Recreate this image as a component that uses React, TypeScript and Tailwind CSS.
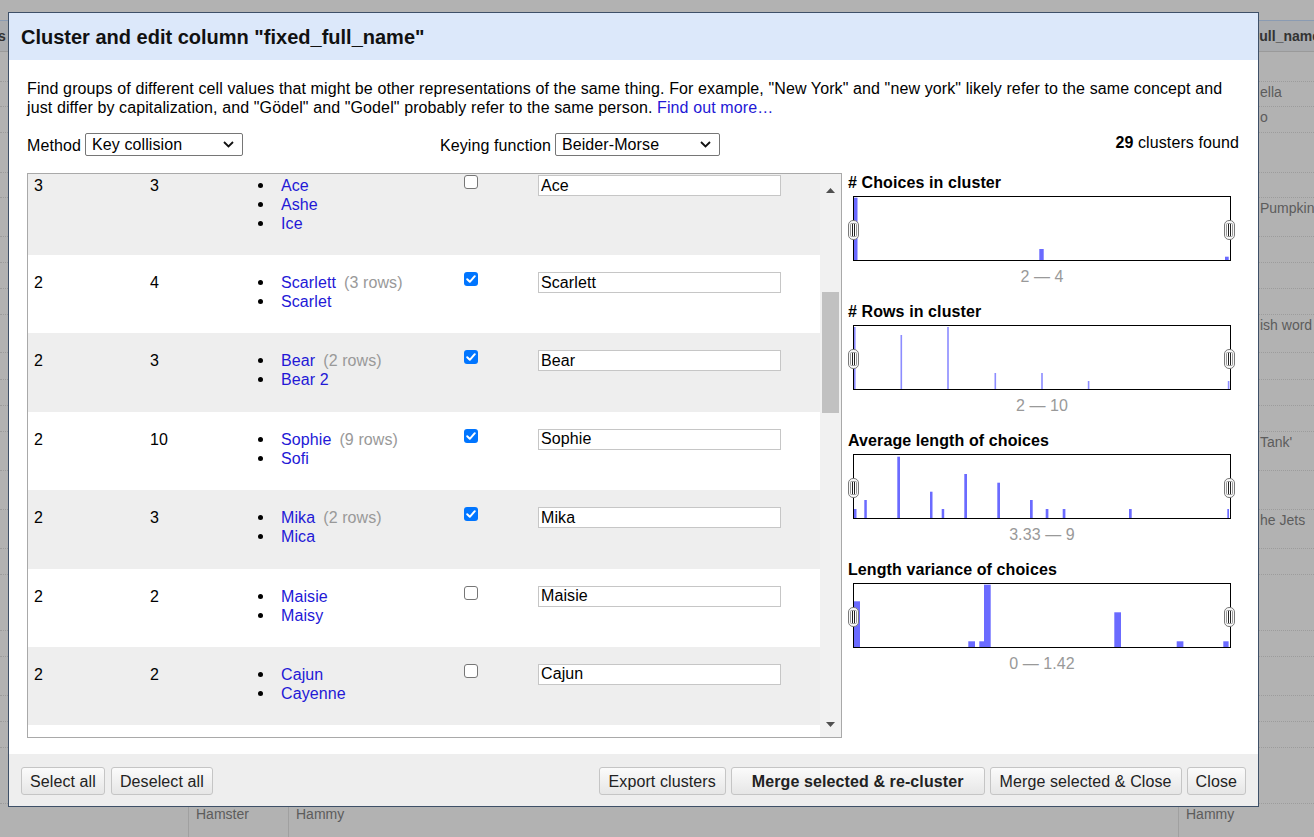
import React from "react";

const FONT = "font-['Liberation_Sans',Arial,sans-serif]";

type BgRow = { h: string; t?: string };
const bgRows: BgRow[] = [
  { h: "h-[30px]" },
  { h: "h-[25px]", t: "ella" },
  { h: "h-[26px]", t: "o" },
  { h: "h-[40px]" },
  { h: "h-[25px]" },
  { h: "h-[39px]", t: "Pumpkin" },
  { h: "h-[26px]" },
  { h: "h-[26px]" },
  { h: "h-[26px]" },
  { h: "h-[38px]", t: "ish word" },
  { h: "h-[27px]" },
  { h: "h-[26px]" },
  { h: "h-[26px]" },
  { h: "h-[39px]", t: "Tank'" },
  { h: "h-[39px]" },
  { h: "h-[39px]", t: "he Jets" },
  { h: "h-[26px]" },
  { h: "h-[56px]" },
  { h: "h-[26px]" },
  { h: "h-[39px]" },
  { h: "h-[26px]" },
  { h: "h-[26px]" },
  { h: "h-[56px]" },
];

type Name = { n: string; rows?: number };
type Cluster = { size: number; rows: number; names: Name[]; checked: boolean; value: string };

const clusters: Cluster[] = [
  { size: 3, rows: 3, names: [{ n: "Ace" }, { n: "Ashe" }, { n: "Ice" }], checked: false, value: "Ace" },
  { size: 2, rows: 4, names: [{ n: "Scarlett", rows: 3 }, { n: "Scarlet" }], checked: true, value: "Scarlett" },
  { size: 2, rows: 3, names: [{ n: "Bear", rows: 2 }, { n: "Bear 2" }], checked: true, value: "Bear" },
  { size: 2, rows: 10, names: [{ n: "Sophie", rows: 9 }, { n: "Sofi" }], checked: true, value: "Sophie" },
  { size: 2, rows: 3, names: [{ n: "Mika", rows: 2 }, { n: "Mica" }], checked: true, value: "Mika" },
  { size: 2, rows: 2, names: [{ n: "Maisie" }, { n: "Maisy" }], checked: false, value: "Maisie" },
  { size: 2, rows: 2, names: [{ n: "Cajun" }, { n: "Cayenne" }], checked: false, value: "Cajun" },
];

function Background() {
  return (
    <div className="flex flex-col text-[14px] text-[#5c5c5c] leading-[19px]">
      <div className="h-[20px]" />
      <div className="h-[32px] bg-[#a9abae] border-t border-[#8a9bb3] border-b border-b-[#9a9a9a] flex items-center justify-between font-bold text-[#333]">
        <span className="-ml-[2px]">s</span>
        <span className="mr-[-6px]">ull_name</span>
      </div>
      {bgRows.map((r, i) => (
        <div key={i} className={`${r.h} shrink-0 border-b border-dotted border-[#9c9c9c] pt-[1px]`}>
          {r.t ? <span className="ml-[1260px] whitespace-nowrap">{r.t}</span> : null}
        </div>
      ))}
      <div className="flex h-[40px] pt-[1px]">
        <div className="w-[188px]" />
        <div className="w-[100px] border-l border-[#a0a0a0] pl-[7px]">Hamster</div>
        <div className="w-[890px] border-l border-[#a0a0a0] pl-[7px]">Hammy</div>
        <div className="flex-1 border-l border-[#a0a0a0] pl-[7px]">Hammy</div>
      </div>
    </div>
  );
}

function Chevron() {
  return (
    <svg width="11" height="7" viewBox="0 0 11 7" className="block">
      <polyline points="1,1 5.5,5.5 10,1" fill="none" stroke="#111" strokeWidth="1.8" />
    </svg>
  );
}

function FakeSelect({ text, w }: { text: string; w: string }) {
  return (
    <div className={`${w} h-[23px] border border-[#767676] rounded-[2px] bg-white flex items-center justify-between pl-[6px] pr-[8px]`}>
      <span className="leading-[19px]">{text}</span>
      <Chevron />
    </div>
  );
}

function Checkbox({ checked }: { checked: boolean }) {
  if (checked) {
    return (
      <div className="w-[14px] h-[14px] rounded-[3px] bg-[#0075ff] flex items-center justify-center">
        <svg width="14" height="14" viewBox="0 0 14 14" className="block">
          <polyline points="3.2,7.2 5.8,9.8 10.8,4.2" fill="none" stroke="#fff" strokeWidth="2" strokeLinecap="round" strokeLinejoin="round" />
        </svg>
      </div>
    );
  }
  return <div className="w-[14px] h-[14px] rounded-[3px] border border-[#767676] bg-white" />;
}

function ClusterRow({ c, first, gray }: { c: Cluster; first: boolean; gray: boolean }) {
  return (
    <div
      className={`flex shrink-0 ${first ? "h-[81px] pt-[2px]" : "h-[78.4px] pt-[18px]"} ${gray ? "bg-[#eeeeee]" : "bg-white"}`}
    >
      <div className="w-[122px] pl-[6px] leading-[19px]">{c.size}</div>
      <div className="w-[91px] leading-[19px]">{c.rows}</div>
      <div className="w-[223px] pl-[17px] flex flex-col">
        {c.names.map((n) => (
          <div key={n.n} className="flex items-center h-[19px]">
            <span className="w-[5px] h-[5px] rounded-full bg-black mr-[18px] shrink-0" />
            <span className="text-[#2318d6] leading-[19px]">{n.n}</span>
            {n.rows ? <span className="ml-[8px] text-[#999] leading-[19px]">({n.rows} rows)</span> : null}
          </div>
        ))}
      </div>
      <div className="w-[74px] -mt-[1px]">
        <Checkbox checked={c.checked} />
      </div>
      <div className="-mt-[1px]">
        <input
          readOnly
          defaultValue={c.value}
          className="block w-[243px] h-[21px] border border-[#c6c6c6] bg-white px-[2px] text-[16px] leading-[19px] text-black outline-none"
        />
      </div>
    </div>
  );
}

function ScrollBar() {
  return (
    <div className="w-[21px] bg-[#f1f1f1] flex flex-col">
      <div className="h-[22px] flex items-end justify-center pb-[3px]">
        <svg width="9" height="5" viewBox="0 0 9 5" className="block">
          <polygon points="0,5 4.5,0 9,5" fill="#505050" />
        </svg>
      </div>
      <div className="h-[96px]" />
      <div className="h-[121px] mx-[2px] bg-[#c1c1c1]" />
      <div className="flex-1" />
      <div className="h-[26px] flex items-start justify-center pt-[11px]">
        <svg width="9" height="5" viewBox="0 0 9 5" className="block">
          <polygon points="0,0 4.5,5 9,0" fill="#505050" />
        </svg>
      </div>
    </div>
  );
}

function Handle() {
  return (
    <svg width="11" height="20" viewBox="0 0 11 20" className="block">
      <rect x="0.5" y="0.5" width="10" height="19" rx="4.5" fill="#f7f7f7" stroke="#7a7a7a" />
      <rect x="2.5" y="3.5" width="6" height="13" rx="1" fill="#fff" stroke="#9a9a9a" />
      <line x1="4.5" y1="4" x2="4.5" y2="16" stroke="#222" strokeWidth="1" />
      <line x1="6.5" y1="4" x2="6.5" y2="16" stroke="#222" strokeWidth="1" />
    </svg>
  );
}

type Bar = [number, number, number];

function Histogram({ title, range, bars, color }: { title: string; range: string; bars: Bar[]; color: string }) {
  return (
    <div className="mb-[16px]">
      <div className="h-[19px] leading-[19px] font-bold text-black">{title}</div>
      <div className="relative mt-[4px] ml-[5px] w-[378px] h-[65px] border border-black bg-white">
        <svg width="376" height="63" viewBox="0 0 376 63" className="block">
          {bars.map(([x, w, y], i) => (
            <rect key={i} x={x} y={y} width={w} height={63 - y} fill={color} />
          ))}
        </svg>
        <div className="absolute left-[-6px] top-[23px]">
          <Handle />
        </div>
        <div className="absolute left-[370px] top-[23px]">
          <Handle />
        </div>
      </div>
      <div className="mt-[6px] ml-[5px] w-[378px] h-[19px] leading-[19px] text-center text-[#999]">{range}</div>
    </div>
  );
}

const h1: Bar[] = [
  [0, 3.5, 0.7],
  [185.3, 4.4, 52],
  [371, 3.7, 59.7],
];
const h2: Bar[] = [
  [0, 1.6, 1],
  [46.5, 1.6, 9],
  [93.2, 1.6, 1],
  [140.5, 1.6, 47],
  [187.2, 1.6, 47],
  [233.8, 1.6, 55],
  [373.8, 1.6, 55],
];
const h3: Bar[] = [
  [0, 2.5, 54],
  [10.3, 2.5, 45],
  [43.3, 2.7, 1.7],
  [76, 2.5, 36.7],
  [87.7, 2.5, 54],
  [110.3, 2.7, 19],
  [143.3, 2.7, 27.7],
  [176, 2.7, 45],
  [191.7, 2.7, 54],
  [208.7, 2.7, 54],
  [275, 2.7, 54],
  [373.3, 1.7, 54],
];
const h4: Bar[] = [
  [0, 6, 17.3],
  [114.3, 6.7, 57.3],
  [125.3, 4.7, 57.3],
  [130, 6.7, 0.7],
  [260.3, 6.7, 28.3],
  [322.7, 6.7, 57.3],
  [369.3, 5.3, 57.3],
];

function Btn({ children, kind }: { children: React.ReactNode; kind?: "bold" | "wide" }) {
  const pad = kind === "bold" ? "font-bold px-[20px]" : kind === "wide" ? "px-[9px]" : "px-[8px]";
  return (
    <button
      className={`h-[28px] rounded-[3px] border border-[#c5c5c5] bg-linear-to-b from-[#fbfbfb] to-[#e6e6e6] text-[16px] leading-[19px] text-[#222] whitespace-nowrap ${pad}`}
    >
      {children}
    </button>
  );
}

function Dialog() {
  return (
    <div className="absolute left-[8px] top-[12px] w-[1251px] h-[795px] border border-[#3e5068] bg-white flex flex-col text-[16px] text-black">
      <div className="h-[47px] shrink-0 bg-[#dce8fa] flex items-center pl-[12px] pt-[1px]">
        <h1 className="text-[20px] font-bold text-[#111] leading-[24px]">Cluster and edit column "fixed_full_name"</h1>
      </div>
      <div className="flex-1 min-h-0 flex flex-col px-[18px] pt-[19px] pb-[16px] tracking-[0.1px]">
        <p className="leading-[19px] tracking-[0.11px]">
          Find groups of different cell values that might be other representations of the same thing. For example, "New
          York" and "new york" likely refer to the same concept and just differ by capitalization, and "Gödel" and
          "Godel" probably refer to the same person. <span className="text-[#2318d6]">Find out more…</span>
        </p>
        <div className="mt-[16px] h-[23px] flex items-center">
          <div className="w-[413px] flex items-center">
            <span className="leading-[19px] mt-[1px]">Method</span>
            <div className="ml-[4px]">
              <FakeSelect text="Key collision" w="w-[158px]" />
            </div>
          </div>
          <div className="flex items-center">
            <span className="leading-[19px] mt-[1px]">Keying function</span>
            <div className="ml-[4px]">
              <FakeSelect text="Beider-Morse" w="w-[165px]" />
            </div>
          </div>
          <div className="ml-auto mr-[1px] leading-[19px] -mt-[5px]">
            <b>29</b> clusters found
          </div>
        </div>
        <div className="mt-[17px] flex-1 min-h-0 flex">
          <div className="w-[815px] h-full border border-[#a9a9a9] flex">
            <div className="flex-1 flex flex-col overflow-hidden">
              {clusters.map((c, i) => (
                <ClusterRow key={i} c={c} first={i === 0} gray={i % 2 === 0} />
              ))}
              <div className="flex-1 bg-white" />
            </div>
            <ScrollBar />
          </div>
          <div className="ml-[6px] flex-1 flex flex-col">
            <Histogram title="# Choices in cluster" range="2 — 4" bars={h1} color="#6a6aff" />
            <Histogram title="# Rows in cluster" range="2 — 10" bars={h2} color="#8c8cff" />
            <Histogram title="Average length of choices" range="3.33 — 9" bars={h3} color="#6b6bff" />
            <Histogram title="Length variance of choices" range="0 — 1.42" bars={h4} color="#6b6bff" />
          </div>
        </div>
      </div>
      <div className="h-[52px] shrink-0 bg-[#eeeeee] flex items-start justify-between px-[12px] pt-[13px] tracking-[0.1px]">
        <div className="flex gap-[6px]">
          <Btn>Select all</Btn>
          <Btn>Deselect all</Btn>
        </div>
        <div className="flex gap-[5px]">
          <Btn kind="wide">Export clusters</Btn>
          <Btn kind="bold">Merge selected &amp; re-cluster</Btn>
          <Btn kind="wide">Merge selected &amp; Close</Btn>
          <Btn>Close</Btn>
        </div>
      </div>
    </div>
  );
}

export default function App() {
  return (
    <div className={`relative w-[1314px] h-[837px] overflow-hidden bg-[#b2b2b2] ${FONT}`}>
      <Background />
      <Dialog />
    </div>
  );
}
